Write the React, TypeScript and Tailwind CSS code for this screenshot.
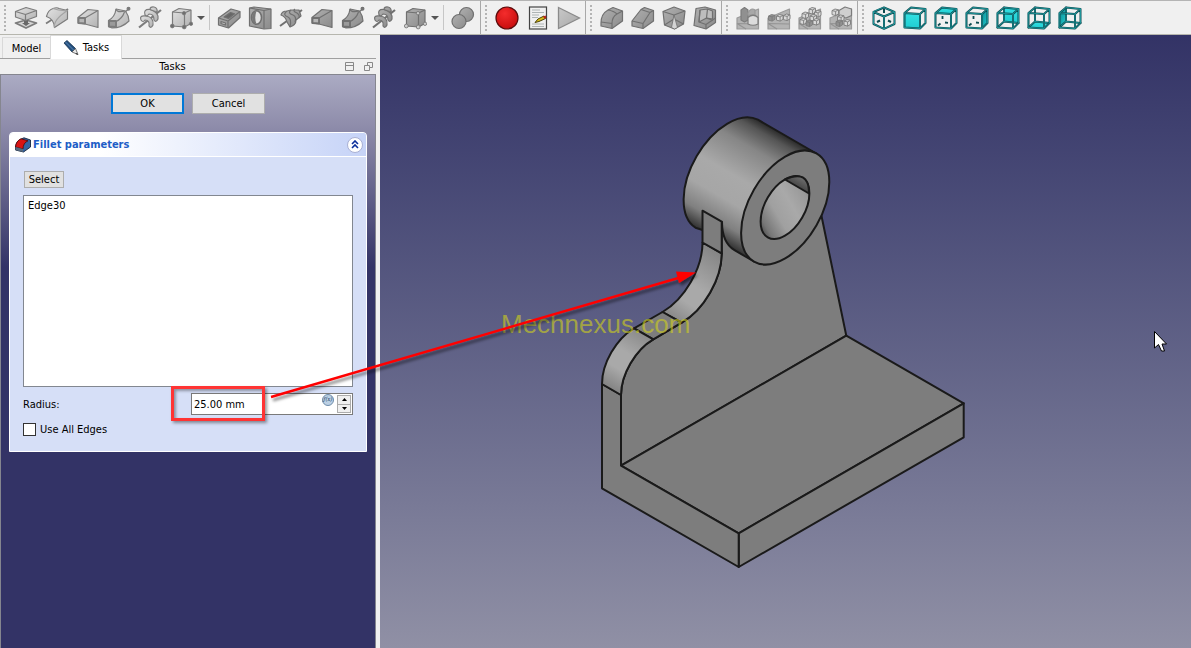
import { useState, type ReactNode } from 'react';
import clsx from 'clsx';

type Tool = { name: string; icon: ReactNode };

const CUBE_FACES: Record<string, string> = {
  front: 'M1.5 7L17 8V22.5L1.5 21.5z',
  top: 'M1.5 7L8 1.5L22.5 3L17 8z',
  right: 'M17 8L22.5 3V17L17 22.5z',
  rear: 'M8 1.5L22.5 3V17L8 15.5z',
  bottom: 'M1.5 21.5L8 15.5L22.5 17L17 22.5z',
  left: 'M1.5 7L8 1.5V15.5L1.5 21.5z',
};

const CUBE_OUTLINE = 'M1.5 7L8 1.5L22.5 3V17L17 22.5L1.5 21.5zM1.5 7L17 8L22.5 3M17 8V22.5';
const CUBE_HIDDEN = 'M8 1.5V15.5L1.5 21.5M8 15.5L22.5 17';
const CUBE_HINTS = 'M8.5 10V13M11 16.5L14 16.8M4 19.5L6.5 17.5';

// dark outline with a bright core
function Wire({ d }: { d: string }) {
  return (
    <g fill="none" strokeLinejoin="round" strokeLinecap="round">
      <path d={d} stroke="#0c4b50" strokeWidth="2" />
      <path d={d} stroke="#22a4aa" strokeWidth="0.8" />
    </g>
  );
}

function ViewCube({ face }: { face: string }) {
  const open = face === 'rear' || face === 'bottom' || face === 'left';
  return (
    <>
      <path d={CUBE_FACES[face]} fill={face === 'right' || face === 'left' ? 'url(#cyanDark)' : 'url(#cyan)'} />
      {open && <Wire d={CUBE_HIDDEN} />}
      {!open && face !== 'front' && <path d={CUBE_HINTS} stroke="#0c4b50" strokeWidth="1.8" fill="none" />}
      <Wire d={CUBE_OUTLINE} />
    </>
  );
}

function Gray({ children, dark }: { children: ReactNode; dark?: boolean }) {
  return (
    <g stroke={dark ? '#707070' : '#7c7c7c'} strokeWidth="1.2" strokeLinejoin="round" fill={dark ? 'url(#grayDark)' : 'url(#grayLight)'}>
      {children}
    </g>
  );
}

function Loft({ dark }: { dark?: boolean }) {
  return (
    <Gray dark={dark}>
      <path d="M2 11.5L12 3.5L22 4.5V21.5L9 18L2 17z" />
      <path d="M2 11.5L9 12L22 4.5M9 12V18" fill="none" />
      <path d="M2.5 12H9V17.5L2.5 17z" fill="#b5b5b5" strokeWidth="1.8" />
    </Gray>
  );
}

function Sweep({ dark }: { dark?: boolean }) {
  return (
    <Gray dark={dark}>
      <path d="M1.5 14.5Q8 11 9 3L18.5 5Q22 10 22 15Q15 22 5 22L1.5 20.5z" />
      <path d="M9 3Q10 7 18 5M9 15.5Q15 13 17.5 6M9 15.5V21" fill="none" />
      <path d="M2 15H9V21L2 20.5z" fill="#9a9a9a" strokeWidth="1.8" />
      <path d="M18 6L21 3.5" />
      <circle cx="21.5" cy="2.7" r="1.4" fill="#777" />
    </Gray>
  );
}

function Helix({ dark }: { dark?: boolean }) {
  return (
    <Gray dark={dark}>
      <path d="M1 21.5L23 4" strokeWidth="2.2" />
      <path d="M3 14Q1 9 8 10Q16 11 15 19Q13 23 11 20Q12 14 7 14Q5 17 3 14z" />
      <path d="M7 9Q5 3 12 3.5Q21 6 20 13Q18 17 16 14Q16 8 11 8Q9 11 7 9z" />
      <path d="M12 3.5Q12 0.5 16 1Q20 2 19 6.5Q15 4.5 12 3.5z" />
    </Gray>
  );
}

function PrimitiveBox({ dark }: { dark?: boolean }) {
  return (
    <Gray dark={dark}>
      <path d="M3.5 6L10 2.5L22 4V17.5L15.5 21L3.5 20z" />
      <path d="M3.5 6L15.5 7L22 4M15.5 7V21" fill="none" />
      <g fill={dark ? '#ccc' : '#6e6e6e'} strokeWidth="0.8">
        <circle cx="3.3" cy="20" r="1.9" />
        <circle cx="15.2" cy="21" r="1.9" />
        <circle cx="22" cy="17.8" r="1.7" />
        <circle cx="15" cy="7.2" r="1.7" />
      </g>
    </Gray>
  );
}

function PatternBase({ children }: { children: ReactNode }) {
  return (
    <Gray>
      <path d="M1 12L22.5 3V23H1z" fill="#b4b4b4" stroke="#9a9a9a" />
      <path d="M1 17.5L10 23M1 17.5L22.5 18" fill="none" stroke="#949494" />
      {children}
    </Gray>
  );
}

function MiniCube({ x, y, fill = '#d9d9d9' }: { x: number; y: number; fill?: string }) {
  return (
    <g transform={`translate(${x} ${y})`} strokeWidth="0.9">
      <path d="M0 1.6L3 0L6.5 0.8V4.8L3.6 6.6L0 5.6z" fill={fill} />
      <path d="M0 1.6L3.6 2.4L6.5 0.8M3.6 2.4V6.6" fill="none" />
    </g>
  );
}

const additive: Tool[] = [
  { name: 'Pad', icon: (
    <Gray>
      <path d="M1.5 17L12 14L22.5 17L12 22z" fill="#d5d5d5" strokeWidth="1.8" />
      <path d="M8 17H10V14H14V17H16L12 20z" fill="#686868" stroke="none" />
      <path d="M1.5 5.5L12 1.5L22.5 4.5V10.5L11.5 14.5L1.5 11z" />
      <path d="M1.5 5.5L11.5 8.5L22.5 4.5M11.5 8.5V14.5" fill="none" />
    </Gray>
  ) },
  { name: 'Revolution', icon: (
    <Gray>
      <path d="M1 17.5L8 13M18 7L23 3" strokeWidth="1.8" />
      <path d="M1.5 10.5Q3 4 8 2.5Q12 1 14 2.5L22.5 4.5V13L9.5 21.5Q9 13 1.5 10.5z" />
      <path d="M8 2.5Q14 5 22.5 4.5M9.5 21.5Q8 14 22.5 4.5" fill="none" stroke="#a2a2a2" />
    </Gray>
  ) },
  { name: 'Additive loft', icon: <Loft /> },
  { name: 'Additive pipe', icon: <Sweep /> },
  { name: 'Additive helix', icon: <Helix /> },
  { name: 'Additive box', icon: <PrimitiveBox /> },
];

const subtractive: Tool[] = [
  { name: 'Pocket', icon: (
    <Gray dark>
      <path d="M1.5 12L14 3L23 5.5V11.5L11.5 22L1.5 19z" />
      <path d="M1.5 12L11 15L23 5.5M11 15V22" fill="none" />
      <path d="M7 11L13.5 6.5L17.5 7.8L11.5 12.5z" fill="#666" />
      <path d="M4 15.5L8.5 17V19L4 17.5z" fill="#c2c2c2" />
    </Gray>
  ) },
  { name: 'Hole', icon: (
    <Gray dark>
      <path d="M1.5 2L6 1L23 3V22.5L16 23L1.5 20z" />
      <path d="M1.5 2L16 4.5L23 3M16 4.5V22.5" fill="none" />
      <ellipse cx="8.5" cy="11.5" rx="5" ry="6.8" fill="#e4e4e4" strokeWidth="1.6" />
      <path d="M8.5 5Q4 6 4 11.5Q4 17 8.5 18Q6 12 8.5 5z" fill="#777" stroke="none" />
    </Gray>
  ) },
  { name: 'Groove', icon: (
    <Gray dark>
      <path d="M1 20L23 4" strokeWidth="2" />
      <path d="M2 9Q3 5 8 5L12 4L20 4L22 10L17 14Q17 19 11 21L8 16Q7 11 2 9z" />
      <path d="M8 5Q3 9 9 11Q13 13 11 21M12 4Q8 7 14 9Q18 11 16 16M16 3Q13 5 18 7Q21 9 20 12" fill="none" />
    </Gray>
  ) },
  { name: 'Subtractive loft', icon: <Loft dark /> },
  { name: 'Subtractive pipe', icon: <Sweep dark /> },
  { name: 'Subtractive helix', icon: <Helix dark /> },
  { name: 'Subtractive box', icon: <PrimitiveBox dark /> },
];

const macros: Tool[] = [
  { name: 'Record macro', icon: <circle cx="12" cy="12" r="11" fill="url(#record)" stroke="#5c0c0c" strokeWidth="1.2" /> },
  { name: 'Edit macro', icon: (
    <>
      <rect x="3.5" y="1" width="17" height="22" fill="#f0f0f0" stroke="#444" strokeWidth="1.2" />
      <path d="M6 4H14M6 6.5H18M6 9H13M6 11.5H12M6 18H18M6 20.5H18" stroke="#aeb4b4" strokeWidth="1.2" />
      <path d="M9 16.5L12 13L18 10L19.5 12.5L13 15.5z" fill="#d8bd17" stroke="#4d430a" />
      <path d="M17 10.5L19.5 9.5L20.5 11.5L18.5 13z" fill="#b7261c" />
    </>
  ) },
  { name: 'Run macro', icon: <path d="M1.5 1.5L22.5 12L1.5 22.5z" fill="url(#play)" stroke="#8b8b8b" strokeWidth="1.3" /> },
];

const dressUp: Tool[] = [
  { name: 'Fillet', icon: (
    <Gray dark>
      <path d="M1 17Q1 8 8 4L13 1.5L22.5 5V15L12 22.5L1 20z" />
      <path d="M12 22.5V17.5Q12 11 17 8L22.5 5M1 16L12 17.5M8 4Q14 5 17 8" fill="none" />
    </Gray>
  ) },
  { name: 'Chamfer', icon: (
    <Gray dark>
      <path d="M1 15L10 3.5L13.5 1.5L22.5 4.5V15L12 22.5L1 20z" />
      <path d="M12 22.5V17.5L19 6.5L22.5 4.5M1 15L12 17.5M10 3.5L19 6.5" fill="none" />
    </Gray>
  ) },
  { name: 'Draft', icon: (
    <Gray dark>
      <path d="M1 5.5L12 1L23 5L21.5 18L12.5 23L2.5 19z" />
      <path d="M1 5.5L12 9L23 5M12 9L12.5 23M2.5 19L12 13L21.5 18" fill="none" />
      <path d="M12 9L9.5 21.5L12.5 23L15.5 21.5z" fill="#d4d4d4" strokeWidth="0.8" />
    </Gray>
  ) },
  { name: 'Thickness', icon: (
    <Gray dark>
      <path d="M3 2.5L12 1L22.5 4V16.5L13 23L1 19.5z" />
      <path d="M7 4L14.5 3L19.5 5V13L13.5 12L6 16z" fill="#bdbdbd" />
      <path d="M14.5 3L13.5 12L20 14.5M6 16L13 18.5L22.5 12M13 18.5V23M7 4L6 16" fill="none" />
    </Gray>
  ) },
];

const patterns: Tool[] = [
  { name: 'Mirrored', icon: (
    <PatternBase>
      <path d="M5 4L8.5 1.5L12 4V14L8.5 16L5 14z" fill="#909090" />
      <path d="M12 7Q15 1 19 4L19 9H12z" fill="#a8a8a8" stroke="#999" />
      <path d="M12 11.5Q17 7 22 11.5V18Q17 20.5 12 18z" fill="#dcdcdc" />
    </PatternBase>
  ) },
  { name: 'Linear pattern', icon: (
    <PatternBase>
      <MiniCube x={1.5} y={8.5} fill="#909090" />
      <MiniCube x={9.5} y={8.5} />
      <MiniCube x={16.5} y={8} />
    </PatternBase>
  ) },
  { name: 'Polar pattern', icon: (
    <PatternBase>
      <MiniCube x={11} y={1.5} />
      <MiniCube x={4} y={6} />
      <MiniCube x={16.5} y={4.5} />
      <MiniCube x={12} y={8.5} />
      <MiniCube x={2} y={12} />
      <MiniCube x={15} y={12.5} />
      <MiniCube x={8} y={14} fill="#909090" />
    </PatternBase>
  ) },
  { name: 'Multi transform', icon: (
    <PatternBase>
      <path d="M10 4.5L16 1L22.5 3V9.5L17 12L10 10z" fill="#cfcfcf" />
      <MiniCube x={3} y={3} />
      <MiniCube x={8.5} y={9} />
      <MiniCube x={7} y={14} fill="#909090" />
      <MiniCube x={15} y={13.5} />
    </PatternBase>
  ) },
];

const views: Tool[] = [
  { name: 'Isometric', icon: (
    <>
      <Wire d="M12 1.5L22.5 6V18L12 22.8L1.5 18V6zM1.5 6L12 10.5L22.5 6M12 10.5V22.8" />
      <path d="M12 3V7M5 16L8 14.5M19 16L16 14.5" stroke="#0c4b50" strokeWidth="2" />
    </>
  ) },
  ...['front', 'top', 'right', 'rear', 'bottom', 'left'].map((face) => ({ name: face, icon: <ViewCube face={face} /> })),
];

function ToolIcons({ tools }: { tools: Tool[] }) {
  return tools.map((tool) => (
    <button key={tool.name} aria-label={tool.name} className="flex w-[31px] items-center justify-center">
      <svg viewBox="0 0 24 24" className="size-6">{tool.icon}</svg>
    </button>
  ));
}

function DropArrow({ label }: { label: string }) {
  return (
    <button aria-label={label} className="flex w-[10px] items-center justify-center">
      <svg viewBox="0 0 8 4" className="h-1 w-2"><path d="M0 0H8L4 4z" fill="#555" /></svg>
    </button>
  );
}

function Separator() {
  return <div className="mx-[3px] my-1 w-px bg-[#c6c6c6]" />;
}

function ToolGroup({ children, first }: { children: ReactNode; first?: boolean }) {
  return (
    <div className={clsx('flex shrink-0 items-stretch pr-px', !first && 'border-l border-[#a8a8a8]')}>
      <div className="flex w-[10px] items-center justify-center">
        <div className="h-[26px] border-l-2 border-dotted border-[#b4b4b4]" />
      </div>
      {children}
    </div>
  );
}

function Toolbar() {
  return (
    <header className="flex h-[35px] shrink-0 overflow-hidden border-t border-b border-t-[#b4b4b4] border-b-[#b6b6ae] bg-[#f0f0f0]">
      <ToolGroup first>
        <ToolIcons tools={additive} />
        <DropArrow label="More additive primitives" />
        <Separator />
        <ToolIcons tools={subtractive} />
        <DropArrow label="More subtractive primitives" />
        <Separator />
        <ToolIcons tools={[{ name: 'Boolean', icon: (
          <Gray dark>
            <circle cx="15.5" cy="8.5" r="7" />
            <circle cx="8" cy="15.5" r="7" />
          </Gray>
        ) }]} />
        <div className="w-px" />
      </ToolGroup>
      <ToolGroup><ToolIcons tools={macros} /></ToolGroup>
      <ToolGroup><ToolIcons tools={dressUp} /></ToolGroup>
      <ToolGroup><ToolIcons tools={patterns} /></ToolGroup>
      <ToolGroup><ToolIcons tools={views} /></ToolGroup>
    </header>
  );
}

function TaskPanel() {
  const [tab, setTab] = useState('tasks');
  const [radius, setRadius] = useState('25.00 mm');
  const [allEdges, setAllEdges] = useState(false);

  const step = (delta: number) => setRadius(`${Math.max(0, (parseFloat(radius) || 0) + delta).toFixed(2)} mm`);

  return (
    <aside className="flex w-[376px] shrink-0 flex-col">
      <div className="flex h-6 items-end border-b border-[#a0a0a0] pl-[2px]">
        <button
          onClick={() => setTab('model')}
          className={clsx('h-[21px] w-12 border-t border-l border-[#d9d9d9] pt-px text-center', tab === 'model' && 'bg-white')}
        >
          Model
        </button>
        <button
          onClick={() => setTab('tasks')}
          className={clsx('-mb-px flex h-6 w-[72px] items-center justify-center gap-1 border border-b-0 border-[#d9d9d9]', tab === 'tasks' && 'bg-white')}
        >
          <svg viewBox="0 0 16 16" className="size-4">
            <path d="M1 3L4 0.5L12.5 8.5L9 12z" fill="#24507f" stroke="#17324f" strokeWidth="0.8" />
            <path d="M2.5 2L10.5 10" stroke="#5d88b5" strokeWidth="1" />
            <path d="M12.5 8.5L15 14.5L9 12z" fill="#e8e8e8" stroke="#555" strokeWidth="0.8" />
            <path d="M13.5 13L15.3 15L12.5 14z" fill="#222" />
          </svg>
          Tasks
        </button>
      </div>

      <div className="flex h-[15px] items-center">
        <h1 className="flex-1 pt-px text-center">Tasks</h1>
        <div className="flex gap-[10px] pr-[3px]">
          <button aria-label="Toggle overlay">
            <svg viewBox="0 0 9 9" className="size-[9px]"><path d="M0.5 0.5H8.5V8.5H0.5zM0.5 3.5H8.5" fill="none" stroke="#888" /></svg>
          </button>
          <button aria-label="Float panel">
            <svg viewBox="0 0 9 9" className="size-[9px]"><path d="M3.5 3V0.5H8.5V5.5H6M0.5 3.5H5.5V8.5H0.5z" fill="none" stroke="#888" /></svg>
          </button>
        </div>
      </div>

      <div className="flex-1 border border-b-0 border-[#85868f] bg-[#333366] bg-[linear-gradient(#ababc3,#8f8dab_50px,#333366_192px)] px-2 pt-[18px]">
        <div className="flex justify-center gap-2">
          <button className="h-[21px] w-[73px] border-2 border-[#0078d7] bg-[#e1e1e1] pt-px leading-[16px]">OK</button>
          <button className="h-[21px] w-[73px] border border-[#adadad] bg-[#e1e1e1] pt-px">Cancel</button>
        </div>

        <section className="mt-[18px] rounded-t-[4px] border border-white bg-[#d6dff7]">
          <div className="flex h-6 items-center gap-[2px] rounded-t-[3px] border-b border-white bg-linear-to-r from-white from-25% to-[#c6d3f7] pr-[3px] pl-[5px]">
            <svg viewBox="0 0 16 16" className="size-4">
              <path d="M0.5 11Q0.5 5 5 2.5L9 0.8L15.5 3V10L8.5 15L0.5 13z" fill="#3465a4" stroke="#17263c" strokeWidth="0.9" />
              <path d="M0.5 10Q1 4 6 1.8L13 3.8Q8 6 8 12z" fill="#d91414" stroke="#4f0909" strokeWidth="0.8" />
              <path d="M8 12V15L0.5 13V10z" fill="#56697e" />
            </svg>
            <h2 className="flex-1 pt-px font-bold text-[#215dc6]">Fillet parameters</h2>
            <button aria-label="Collapse" className="flex size-4 items-center justify-center rounded-full border border-[#a9b0d4] bg-white">
              <svg viewBox="0 0 8 9" className="h-[9px] w-2">
                <path d="M1 4L4 1L7 4M1 8L4 5L7 8" fill="none" stroke="#0b2f9b" strokeWidth="1.6" />
              </svg>
            </button>
          </div>

          <div className="px-[13px] pt-[14px] pb-[15px]">
            <button className="ml-px block h-[17px] w-10 border border-[#adadad] bg-[#e1e1e1] leading-[16px]">Select</button>
            <ul className="mt-[7px] h-48 border border-[#828790] bg-white px-1 pt-[3px]">
              <li>Edge30</li>
            </ul>

            <div className="mt-[6px] flex items-center">
              <label htmlFor="radius" className="w-[168px] pt-[2px]">Radius:</label>
              <div className="relative flex h-[22px] flex-1 border border-[#7a7a7a] bg-white">
                <input id="radius" value={radius} onChange={(e) => setRadius(e.target.value)} className="min-w-0 flex-1 px-[2px] pt-[2px] outline-none" />
                <button aria-label="Expression" className="flex size-3 items-center justify-center rounded-full border border-[#6f8dab] bg-[#bcd0e4] font-serif text-[6px] text-[#24466b] italic">f(x)</button>
                <div className="m-px ml-[3px] flex w-[14px] flex-col">
                  <button aria-label="Increase" onClick={() => step(1)} className="flex flex-1 items-center justify-center border border-[#acacac] bg-[#f0f0f0]">
                    <svg viewBox="0 0 5 3" className="h-[3px] w-[5px]"><path d="M0 3L2.5 0L5 3z" /></svg>
                  </button>
                  <button aria-label="Decrease" onClick={() => step(-1)} className="flex flex-1 items-center justify-center border border-t-0 border-[#acacac] bg-[#f0f0f0]">
                    <svg viewBox="0 0 5 3" className="h-[3px] w-[5px]"><path d="M0 0H5L2.5 3z" /></svg>
                  </button>
                </div>
                {/* highlight round the value */}
                <div className="pointer-events-none absolute -top-2 -left-[21px] h-[35px] w-[94px] border-3 border-[#ff3434] shadow-[2px_2px_3px_rgba(0,0,0,0.4),inset_2px_2px_3px_rgba(0,0,0,0.35)]" />
              </div>
            </div>

            <label className="mt-2 flex h-[13px] items-center gap-1">
              <input
                type="checkbox"
                checked={allEdges}
                onChange={(e) => setAllEdges(e.target.checked)}
                className="size-[13px] appearance-none border border-[#333] bg-white checked:bg-[#0078d7]"
              />
              <span className="pt-px">Use All Edges</span>
            </label>
          </div>
        </section>
      </div>
    </aside>
  );
}

function Bracket() {
  return (
    <svg viewBox="380 35 811 613" className="h-full w-full" role="img" aria-label="Bracket model">
      <defs>
        <linearGradient id="boss" gradientUnits="userSpaceOnUse" x1="758" y1="120" x2="695.5" y2="228">
          <stop offset="0" stopColor="#2b2b2b" />
          <stop offset="0.07" stopColor="#555" />
          <stop offset="0.22" stopColor="#868686" />
          <stop offset="0.48" stopColor="#a9a9a9" />
          <stop offset="0.68" stopColor="#a6a6a6" />
          <stop offset="0.86" stopColor="#808080" />
          <stop offset="1" stopColor="#2e2e2e" />
        </linearGradient>
        <linearGradient id="bore" gradientUnits="userSpaceOnUse" x1="802" y1="177.5" x2="768" y2="237.5">
          <stop offset="0" stopColor="#666" />
          <stop offset="0.15" stopColor="#999" />
          <stop offset="0.4" stopColor="#a9a9a9" />
          <stop offset="0.65" stopColor="#a0a0a0" />
          <stop offset="0.88" stopColor="#777" />
          <stop offset="1" stopColor="#444" />
        </linearGradient>
        <linearGradient id="boreTop" gradientUnits="userSpaceOnUse" x1="803" y1="176" x2="797" y2="187">
          <stop offset="0" stopColor="#747474" />
          <stop offset="1" stopColor="#454545" />
        </linearGradient>
        <linearGradient id="concave" gradientUnits="userSpaceOnUse" x1="718" y1="248" x2="668" y2="322">
          <stop offset="0" stopColor="#828282" />
          <stop offset="0.5" stopColor="#a9a9a9" />
          <stop offset="0.7" stopColor="#a9a9a9" />
          <stop offset="1" stopColor="#808080" />
        </linearGradient>
        <linearGradient id="convex" gradientUnits="userSpaceOnUse" x1="645" y1="330" x2="608" y2="392">
          <stop offset="0" stopColor="#868686" />
          <stop offset="0.4" stopColor="#a9a9a9" />
          <stop offset="0.65" stopColor="#a9a9a9" />
          <stop offset="1" stopColor="#7c7c7c" />
        </linearGradient>
      </defs>
      <g stroke="#1a1a1a" strokeWidth="2" strokeLinejoin="round" fill="#7d7d7d">
        {/* web */}
        <path d="M721.7 221V253.3A32.7 56.6 30 0 1 681.7 322.7L653.3 339.3A26.4 45.6 30 0 0 621 395V465.7L846.3 335.7L821.5 216L785 190z" />
        {/* base */}
        <path d="M621 465.7L846.3 335.7L963.7 403.3L738.7 533.3z" />
        <path d="M963.7 403.3V437.3L738.7 567V533.3z" />
        <path d="M621 465.7L738.7 533.3V567L602 488.3V384L621 395z" />
        {/* edge strip */}
        <path d="M702.5 242.5A32.7 56.6 30 0 1 662.5 312L681.7 322.7A32.7 56.6 30 0 0 721.7 253.3z" fill="url(#concave)" />
        <path d="M662.5 312L634 328.3L653.3 339.3L681.7 322.7z" />
        <path d="M634 328.3A26.4 45.6 30 0 0 602 384L621 395A26.4 45.6 30 0 1 653.3 339.3z" fill="url(#convex)" />
        {/* boss */}
        <path d="M757.9 119.7A36 62.4 30 0 0 695.5 227.7L702.5 230L722 222A36 62.4 30 0 0 734.5 250.2L754 261.5L816.4 153.5z" fill="url(#boss)" />
        <ellipse cx="785.2" cy="207.5" rx="36" ry="62.4" transform="rotate(30 785.2 207.5)" />
        <ellipse cx="785" cy="207.5" rx="19.9" ry="34.5" transform="rotate(30 785 207.5)" fill="url(#bore)" />
        <path d="M785 179.5Q802 172 807 182Q809 186 809 193.5z" fill="url(#boreTop)" />
        <path d="M702.5 210.7L721.7 221.7V253.3L702.5 242.5z" />
      </g>
    </svg>
  );
}

export default function App() {
  return (
    <div className="relative flex h-screen flex-col overflow-hidden bg-[#f0f0f0] font-['DejaVu_Sans_Condensed','Noto_Sans',sans-serif] text-[11px] leading-[14px] text-black">
      <svg className="absolute size-0" aria-hidden="true">
        <defs>
          <linearGradient id="grayLight" x1="0" y1="0" x2="1" y2="1"><stop stopColor="#e2e2e2" /><stop offset="1" stopColor="#b2b2b2" /></linearGradient>
          <linearGradient id="grayDark" x1="0" y1="0" x2="1" y2="1"><stop stopColor="#b0b0b0" /><stop offset="1" stopColor="#8b8b8b" /></linearGradient>
          <linearGradient id="play" x1="0" y1="0" x2="1" y2="1"><stop stopColor="#c8c8c8" /><stop offset="1" stopColor="#a8a8a8" /></linearGradient>
          <linearGradient id="cyan" x1="0" y1="0" x2="0" y2="1"><stop stopColor="#34e0e2" /><stop offset="1" stopColor="#1fcdd2" /></linearGradient>
          <linearGradient id="cyanDark" x1="0" y1="0" x2="1" y2="1"><stop stopColor="#0f8a90" /><stop offset="1" stopColor="#1fcdd2" /></linearGradient>
          <radialGradient id="record" cx="0.4" cy="0.3" r="0.7"><stop stopColor="#f42c2c" /><stop offset="1" stopColor="#c90e0e" /></radialGradient>
        </defs>
      </svg>

      <Toolbar />
      <div className="flex min-h-0 flex-1 gap-1">
        <TaskPanel />
        <main className="relative min-w-0 flex-1 bg-linear-to-b from-[#333366] to-[#9090a5]">
          <Bracket />
          <div className="absolute top-[274px] left-[121px] font-['Liberation_Sans',sans-serif] text-[26px] leading-[30px] text-[#d2d21a]/60">Mechnexus.com</div>
          <svg viewBox="0 0 13 21" className="absolute top-[296px] left-[774px] h-[21px] w-[13px]">
            <path d="M0.5 0.5V17L4.5 13.5L7.5 20H10.5L8 13H12.5z" fill="#fff" stroke="#000" />
          </svg>
        </main>
      </div>

      {/* pointer from the radius field to the fillet */}
      <svg viewBox="268 265 432 140" className="pointer-events-none absolute top-[265px] left-[268px] h-[140px] w-[432px]">
        <defs>
          <filter id="arrowShadow" x="-5%" y="-10%" width="110%" height="125%">
            <feDropShadow dx="2" dy="3" stdDeviation="1.5" floodOpacity="0.5" />
          </filter>
        </defs>
        <g filter="url(#arrowShadow)">
          <path d="M271 397L680 277.5" stroke="#f00" strokeWidth="2.4" />
          <path d="M696 272.5L676 271.5L679 283z" fill="#f00" />
        </g>
      </svg>
    </div>
  );
}
